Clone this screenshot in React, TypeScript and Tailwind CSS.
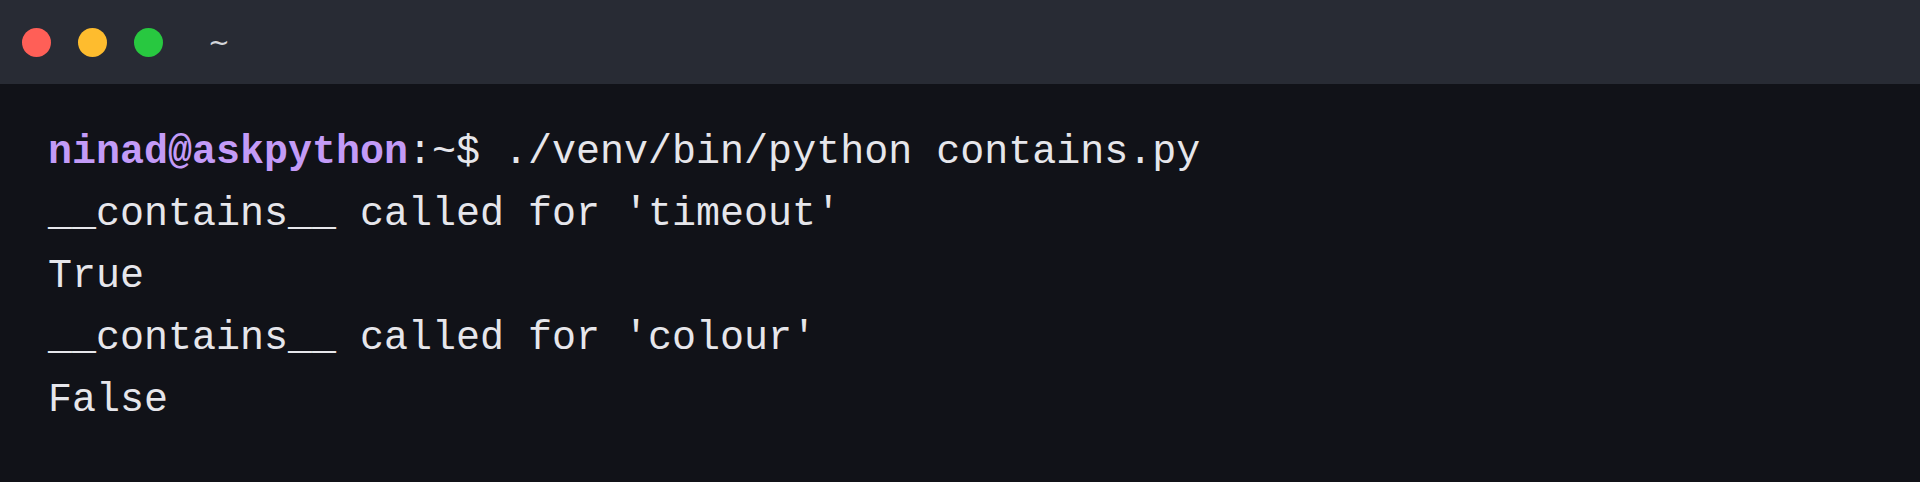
import React from 'react'

const lines = [
  "__contains__ called for 'timeout'",
  'True',
  "__contains__ called for 'colour'",
  'False',
]

const App = () => {
  return (
    <div className="w-[1920px] h-[482px] bg-[#111218] flex flex-col overflow-hidden">
      <div className="h-[84px] bg-[#282b34] flex items-center pl-[22px] shrink-0">
        <span className="w-[29px] h-[29px] rounded-full bg-[#ff5f57]" />
        <span className="w-[29px] h-[29px] rounded-full bg-[#febc2e] ml-[27px]" />
        <span className="w-[29px] h-[29px] rounded-full bg-[#28c840] ml-[27px]" />
        <span className="ml-[45px] text-[26px] text-[#d4d5da] font-['DejaVu_Sans',sans-serif] leading-none">~</span>
      </div>
      <div className="pt-[38px] pl-12 font-['Liberation_Mono',monospace] text-[40px] leading-[62px] text-[#e6e6eb] whitespace-pre">
        <div>
          <span className="text-[#c39bf7] font-bold">ninad@askpython</span>
          <span>:~$ ./venv/bin/python contains.py</span>
        </div>
        {lines.map((line, i) => (
          <div key={i}>{line}</div>
        ))}
      </div>
    </div>
  )
}

export default App
